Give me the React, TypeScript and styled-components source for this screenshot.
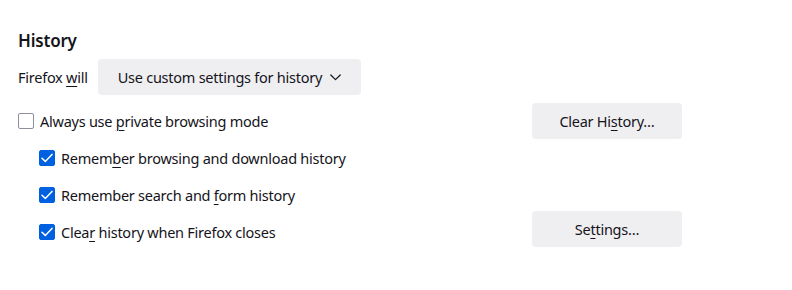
import React from "react"
import { styled, createGlobalStyle } from "styled-components"

// ---------------------------------------------------------------- page

const GlobalStyle = createGlobalStyle`
	body {
		margin: 0;
		background: #ffffff;
		color: #15141a;
		font-family: "Noto Sans", "Open Sans", sans-serif;
		font-size: 14.5px;
		letter-spacing: -0.25px;
	}
`

const Check = () => (
	<svg width="12" height="10" viewBox="0 0 12 10" fill="none">
		<path d="M1 5.2 L4.3 8.4 L11 1.4" stroke="#fff" strokeWidth="1.5" strokeLinecap="round" strokeLinejoin="round" />
	</svg>
)

const Chevron = () => (
	<svg width="11" height="7" viewBox="0 0 11 7" fill="none">
		<path d="M0.8 1 L5.5 5.7 L10.2 1" stroke="#15141a" strokeWidth="1.2" strokeLinecap="round" strokeLinejoin="round" />
	</svg>
)

export default function App() {
	return (
		<>
			<GlobalStyle />
			<Section>
				<Heading>History</Heading>
				<ModeRow>
					<span>
						Firefox <u>w</u>ill
					</span>
					<Button $wide>
						<span>Use custom settings for history</span>
						<Chevron />
					</Button>
				</ModeRow>

				<TopRow>
					<CheckRow>
						<Box $checked={false} />
						<span>
							Always use <u>p</u>rivate browsing mode
						</span>
					</CheckRow>
					<Button>
						<span>
							Clear Hi<u>s</u>tory…
						</span>
					</Button>
				</TopRow>

				<Nested>
					<NestedList>
						<CheckRow>
							<Box $checked>
								<Check />
							</Box>
							<span>
								Remem<u>b</u>er browsing and download history
							</span>
						</CheckRow>
						<CheckRow>
							<Box $checked>
								<Check />
							</Box>
							<span>
								Remember search and <u>f</u>orm history
							</span>
						</CheckRow>
						<CheckRow>
							<Box $checked>
								<Check />
							</Box>
							<span>
								Clea<u>r</u> history when Firefox closes
							</span>
						</CheckRow>
					</NestedList>
					<SettingsButton>
						<span>
							Se<u>t</u>tings…
						</span>
					</SettingsButton>
				</Nested>
			</Section>
		</>
	)
}

// ---------------------------------------------------------------- styled

const Section = styled.section`
	width: 664px;
	padding: 28px 0 0 18px;
	u {
		text-decoration-thickness: 1px;
		text-underline-offset: 3px;
	}
`

const Heading = styled.h2`
	margin: 0;
	font-size: 17px;
	font-weight: 600;
	line-height: 26px;
	letter-spacing: -0.2px;
`

const ModeRow = styled.div`
	display: flex;
	align-items: center;
	gap: 10px;
	margin-top: 5px;
`

const Button = styled.button<{ $wide?: boolean }>`
	display: flex;
	align-items: center;
	justify-content: center;
	gap: 8px;
	width: ${(p) => (p.$wide ? "auto" : "150px")};
	height: 36px;
	padding: 0 ${(p) => (p.$wide ? "20px" : "0")};
	border: none;
	border-radius: 4px;
	background: #efeff2;
	color: #15141a;
	font: inherit;
	letter-spacing: inherit;
	svg {
		margin-top: 1px;
	}
`

const SettingsButton = styled(Button)`
	align-self: flex-end;
	margin-bottom: 3px;
`

const TopRow = styled.div`
	display: flex;
	justify-content: space-between;
	align-items: center;
	margin-top: 7px;
`

const CheckRow = styled.div`
	display: flex;
	align-items: center;
	gap: 6px;
	height: 37px;
`

const Box = styled.span<{ $checked: boolean }>`
	display: flex;
	align-items: center;
	justify-content: center;
	box-sizing: border-box;
	width: 16px;
	height: 16px;
	border-radius: 2px;
	border: 1px solid ${(p) => (p.$checked ? "#0061e0" : "#8f8f9d")};
	background: ${(p) => (p.$checked ? "#0061e0" : "#ffffff")};
`

const Nested = styled.div`
	display: flex;
	justify-content: space-between;
	margin-top: 0;
`

const NestedList = styled.div`
	display: flex;
	flex-direction: column;
	padding-left: 21px;
`
